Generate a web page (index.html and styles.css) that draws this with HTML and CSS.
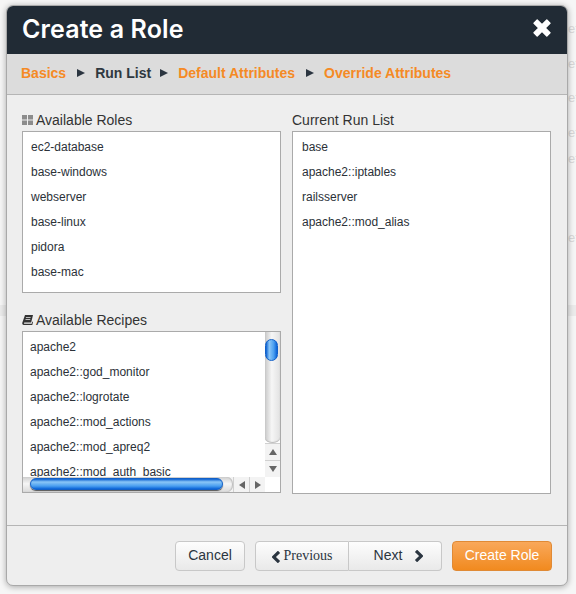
FILE: index.html
```html
<!DOCTYPE html>
<html lang="en">
<head>
<meta charset="utf-8">
<title>Create a Role</title>
<link rel="stylesheet" href="styles.css">
</head>
<body>
<div class="backdrop-band"></div>
<div class="backdrop-text">
  <span>efa</span><span>efa</span><span>efa</span><span>efa</span><span>efa</span><span>efa</span>
</div>
<div class="modal">
  <header class="modal-header">
    <h1>Create a Role</h1>
    <svg class="close" viewBox="0 0 20 20" aria-label="Close"><path d="M2 5.2 5.2 2 10 6.8 14.8 2 18 5.2 13.2 10 18 14.8 14.8 18 10 13.2 5.2 18 2 14.800 6.8 10Z" fill="#fff" stroke="#fff" stroke-width="1.400" stroke-linejoin="round"/></svg>
  </header>
  <nav class="steps">
    <a>Basics</a><i class="arrow"></i><b>Run List</b><i class="arrow"></i><a>Default Attributes</a><i class="arrow"></i><a>Override Attributes</a>
  </nav>
  <div class="modal-body">
    <div class="col">
      <label class="lbl">
        <svg class="ico" viewBox="0 0 11 10"><path d="M0 0h5v4.500H0zM6 0h5v4.500H6zM0 5.500h5V10H0zM6 5.500h5V10H6z" fill="#8c8c8c"/></svg>Available Roles</label>
      <ul class="box roles">
        <li>ec2-database</li><li>base-windows</li><li>webserver</li><li>base-linux</li><li>pidora</li><li>base-mac</li>
      </ul>
      <label class="lbl recipes-lbl">
        <svg class="ico" viewBox="0 0 11 10"><path d="M3 0H11L9.200 7.600H2.600C1.700 7.600 1.700 8.800 2.500 8.800H9.700L10.300 6.400 11 7 10.300 10H1.800C.6 10 0 9 .3 7.800ZM4 2.200 3.800 3H8.500L8.700 2.200ZM3.600 4 3.400 4.800H8.100L8.300 4Z" fill="#333" fill-rule="evenodd"/></svg>Available Recipes</label>
      <div class="box recipes">
        <ul class="recipe-list">
          <li>apache2</li><li>apache2::god_monitor</li><li>apache2::logrotate</li><li>apache2::mod_actions</li><li>apache2::mod_apreq2</li><li>apache2::mod_auth_basic</li>
        </ul>
        <div class="vbar">
          <div class="vtrack"><div class="vthumb"></div></div>
          <div class="sbtn"><i class="tri up"></i></div>
          <div class="sbtn"><i class="tri down"></i></div>
        </div>
        <div class="hbar">
          <div class="htrack"><div class="hthumb"></div></div>
          <div class="sbtn-h"><i class="tri left"></i></div>
          <div class="sbtn-h"><i class="tri right"></i></div>
        </div>
        <div class="corner"></div>
      </div>
    </div>
    <div class="col">
      <label class="lbl">Current Run List</label>
      <ul class="box current">
        <li>base</li><li>apache2::iptables</li><li>railsserver</li><li>apache2::mod_alias</li>
      </ul>
    </div>
  </div>
  <footer class="modal-footer">
    <button class="btn cancel">Cancel</button>
    <div class="btn-group">
      <button class="btn prev"><svg class="chev" viewBox="0 0 9 12"><path d="M7 .8 1.800 6 7 11.200" fill="none" stroke="#2b3540" stroke-width="3.100"/></svg>Previous</button>
      <button class="btn next">Next<svg class="chev" viewBox="0 0 9 12"><path d="M2 .8 7.200 6 2 11.200" fill="none" stroke="#2b3540" stroke-width="3.100"/></svg></button>
    </div>
    <button class="btn create">Create Role</button>
  </footer>
</div>
</body>
</html>
```
FILE: styles.css
```css
* { box-sizing: border-box; }
html, body { margin: 0; height: 594px; overflow: hidden; }
body { background: #f6f6f6; font-family: "Liberation Sans", Arial, sans-serif; color: #2b3138; position: relative; }
.backdrop-band { position: absolute; left: 0; right: 0; top: 305px; height: 11px; background: #ebebeb; }
.backdrop-text { position: absolute; left: 568px; top: 21px; display: flex; flex-direction: column; color: #d8d8d8; font-size: 13px; line-height: 16px; }
.backdrop-text span { margin-bottom: 18.500px; }
.backdrop-text span:nth-child(4) { margin-bottom: 10px; }
.backdrop-text span:nth-child(5) { margin-bottom: 63px; }
.modal { position: absolute; left: 6px; top: 5px; width: 562px; height: 581px; background: #eee; border: 1px solid #a9a9a9; border-radius: 7px; box-shadow: 0 1px 6px rgba(0,0,0,.32); overflow: hidden; display: flex; flex-direction: column; }
.modal-header { height: 48px; flex: none; background: #212b35; display: flex; align-items: center; justify-content: space-between; padding: 0 15px 2px 15px; }
.modal-header h1 { margin: 0; color: #fff; font-family: Inter, "Open Sans", sans-serif; font-size: 25px; font-weight: 600; letter-spacing: .12px; }
.close { width: 20px; height: 20px; margin-bottom: 2px; }
.steps { height: 41px; flex: none; background: #dcdcdc; border-bottom: 1px solid #b5b5b5; display: flex; align-items: center; padding: 0 0 3px 14px; font-size: 14px; font-weight: 700; }
.steps a { color: #f58a25; margin-right: 1px; }
.steps b { color: #2f3840; margin-right: -1px; }
.arrow { width: 0; height: 0; border-left: 8px solid #2b3540; border-top: 4px solid transparent; border-bottom: 4px solid transparent; margin: 0 10px; }
.modal-body { flex: 1; display: flex; gap: 11px; padding: 15px 15px 0; border-bottom: 1px solid #b5b5b5; }
.col { width: 259px; display: flex; flex-direction: column; }
.lbl { display: flex; align-items: center; font-size: 14px; line-height: 20px; height: 20px; margin-bottom: 1px; color: #333; }
.ico { width: 11px; height: 10px; margin-right: 3px; }
.box { border: 1px solid #aaa; background: #fff; margin: 0; padding: 0; list-style: none; font-size: 12px; color: #2b3138; }
.box li, .recipe-list li { height: 25px; line-height: 25px; padding-left: 9px; }
.roles { height: 162px; padding-top: 3px; }
.roles li { padding-left: 8px; }
.recipes-lbl { margin-top: 17px; }
.current { height: 363px; padding-top: 3px; flex: none; }
.recipes { position: relative; height: 162px; overflow: hidden; }
.recipe-list { margin: 0; padding: 3px 0 0; list-style: none; height: 160px; }
.recipe-list li { padding-left: 7px; }
.vbar { position: absolute; right: 0; top: 0; width: 15px; height: 145px; background: #fff; display: flex; flex-direction: column; }
.vtrack { flex: 1; background: linear-gradient(90deg, #c9c9c9, #f6f6f6 45%, #e2e2e2); border-bottom-left-radius: 7px 5px; border-bottom-right-radius: 7px 5px; box-shadow: inset 0 -1px 1px #bbb; padding: 7px 1px 0 0; }
.vthumb { width: 13px; height: 22px; border-radius: 6.500px; background: linear-gradient(90deg, #0a5fd0, #8ac6f7 30%, #4a9ff0 70%, #0a62d6); border: 1px solid #1160c8; }
.sbtn { height: 17px; flex: none; border-top: 1px solid #d0d0d0; background: #f3f3f3; display: flex; align-items: center; justify-content: center; }
.hbar { position: absolute; left: 0; bottom: 0; right: 15px; height: 15px; background: #f3f3f3; display: flex; }
.htrack { flex: 1; background: linear-gradient(#cfcfcf, #f6f6f6 45%, #dadada); border-top-right-radius: 6px 7px; border-bottom-right-radius: 6px 7px; box-shadow: inset -1px 0 1px #bbb; padding: 1px 0 0 7px; }
.hthumb { width: 193px; height: 12px; border-radius: 6px; background: linear-gradient(#0a5fd0, #8ac6f7 30%, #4a9ff0 70%, #0a62d6); border: 1px solid #1160c8; box-shadow: 0 1px 1px #555; }
.sbtn-h { width: 16px; flex: none; border-left: 1px solid #d0d0d0; display: flex; align-items: center; justify-content: center; }
.corner { position: absolute; right: 0; bottom: 0; width: 15px; height: 15px; background: #fff; }
.tri { width: 0; height: 0; display: block; }
.tri.up { border: 4px solid transparent; border-top: 0; border-bottom: 6px solid #666; }
.tri.down { border: 4px solid transparent; border-bottom: 0; border-top: 6px solid #666; }
.tri.left { border: 4px solid transparent; border-left: 0; border-right: 6px solid #666; }
.tri.right { border: 4px solid transparent; border-right: 0; border-left: 6px solid #666; }
.modal-footer { height: 59px; flex: none; display: flex; align-items: flex-start; padding: 15px 15px 0 0; justify-content: flex-end; }
.btn { height: 30px; border: 1px solid #c8c8c8; border-radius: 4px; background: linear-gradient(#fdfdfd, #e9e9e9); font-family: "Liberation Sans", Arial, sans-serif; font-size: 14px; color: #2b3540; padding: 0 0 2px; display: flex; align-items: center; justify-content: center; }
.cancel { width: 70px; margin-right: 10px; }
.btn-group { display: flex; margin-right: 10px; }
.prev { width: 94px; border-radius: 4px 0 0 4px; font-family: "Liberation Serif", serif; font-size: 14px; gap: 3px; padding: 0; }
.next { width: 93px; border-left: 0; border-radius: 0 4px 4px 0; gap: 12px; font-size: 14px; padding-left: 7px; }
.chev { width: 9px; height: 12px; margin-top: 1px; }
.create { width: 100px; background: linear-gradient(#f9a85a, #f18a1f); border-color: #e08a35; color: #fff; }
```
